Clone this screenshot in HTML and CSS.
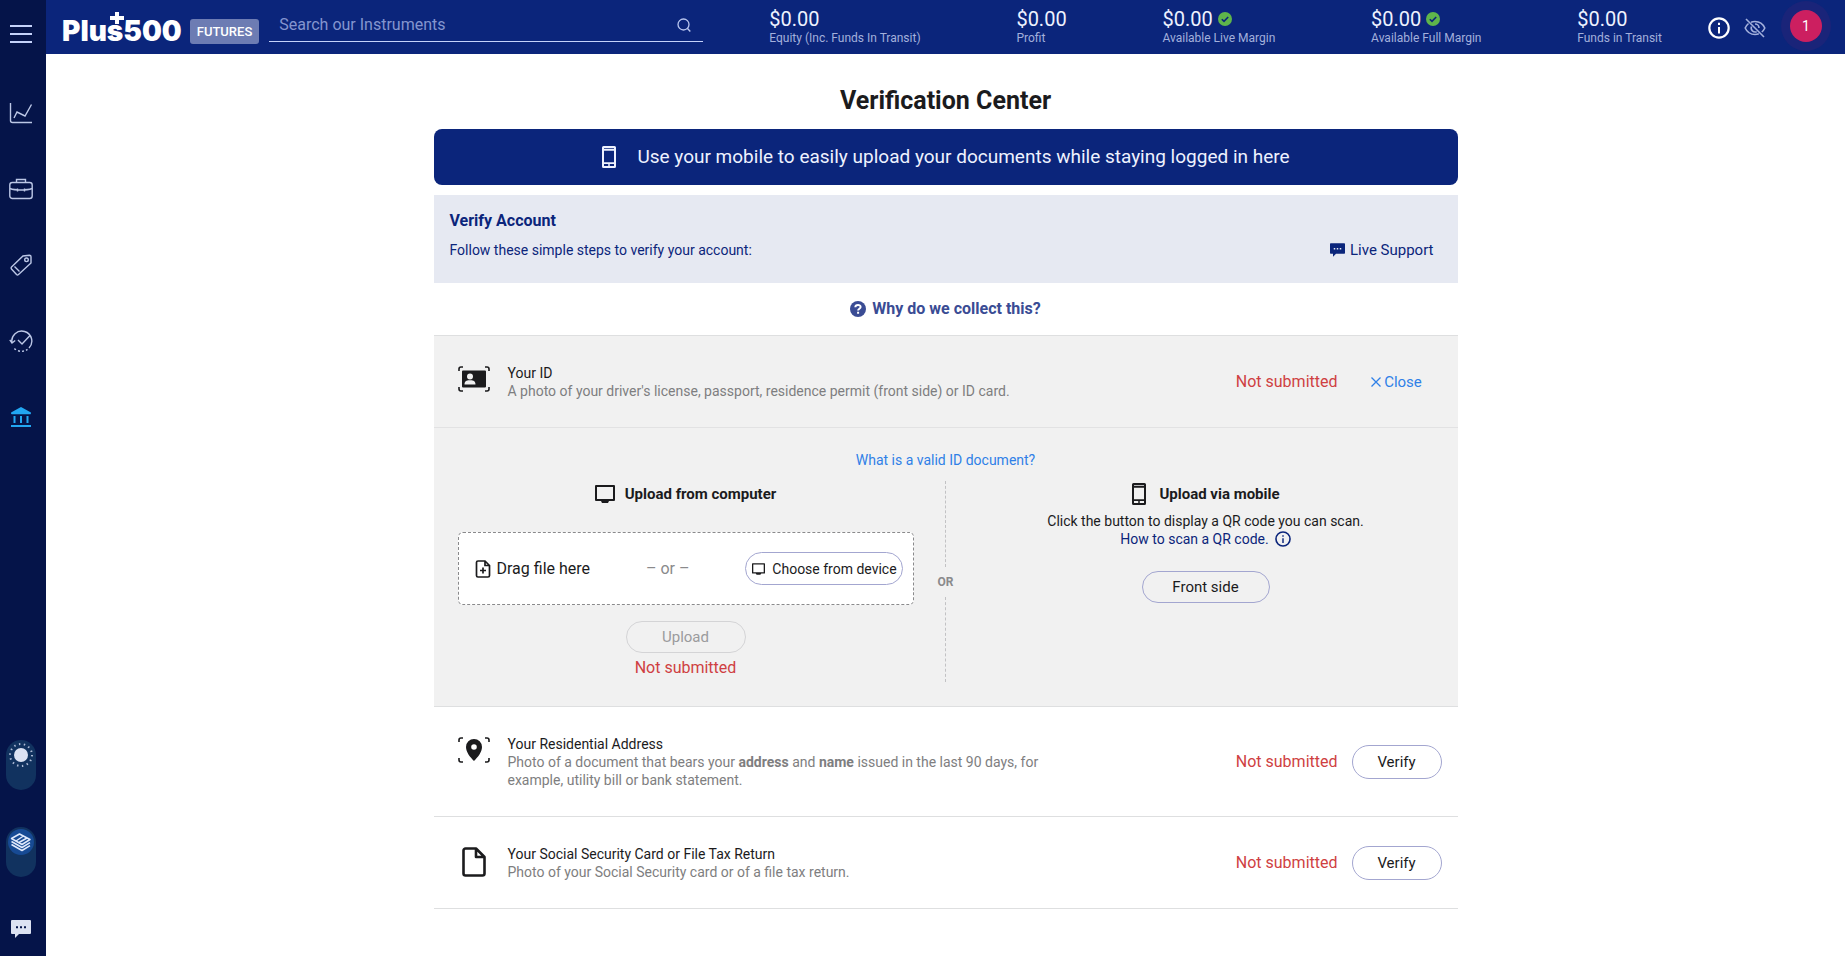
FILE: index.html
```html
<!DOCTYPE html>
<html lang="en">
<head>
<meta charset="utf-8">
<title>Verification Center</title>
<link rel="stylesheet" href="styles.css">
</head>
<body class="app">
<svg class="defs" width="0" height="0" aria-hidden="true">
  <symbol id="phone" viewBox="0 0 16 24"><path fill="currentColor" fill-rule="evenodd" d="M2.500 1h11A1.500 1.500 0 0 1 15 2.500v19a1.500 1.500 0 0 1-1.500 1.500h-11A1.500 1.500 0 0 1 1 21.500v-19A1.500 1.500 0 0 1 2.500 1zM3 3v.8h10V3zM3 5.800v11.400h10V5.800zM3 19v2h10v-2z"/><circle cx="8" cy="20" r="1" fill="currentColor"/></symbol>
  <symbol id="monitor" viewBox="0 0 20 18"><path fill="none" stroke="currentColor" stroke-width="2" stroke-linejoin="round" d="M1 1h18v14H1z"/><path fill="currentColor" d="M6 15h8v1l-1 2H7l-1-2z"/></symbol>
  <symbol id="info" viewBox="0 0 20 20"><circle cx="10" cy="10" r="8.800" fill="none" stroke="currentColor" stroke-width="2"/><path stroke="currentColor" stroke-width="1.800" d="M10 9v6M10 5.200v2"/></symbol>
  <symbol id="chat" viewBox="0 0 20 18"><path fill="currentColor" fill-rule="evenodd" d="M1 0h18a1 1 0 0 1 1 1v12a1 1 0 0 1-1 1H8l-4 4v-4H1a1 1 0 0 1-1-1V1a1 1 0 0 1 1-1zm4 6.200v2h2v-2zm4 0v2h2v-2zm4 0v2h2v-2z"/></symbol>
  <symbol id="check" viewBox="0 0 14 14"><circle cx="7" cy="7" r="7" fill="#5fb54b"/><path fill="none" stroke="#0b257b" stroke-width="1.600" d="M3.800 7.200l2.200 2.200 4.200-4.400"/></symbol>
  <symbol id="frame" viewBox="0 0 32 26"><path fill="none" stroke="currentColor" stroke-width="1.600" d="M1 5V3a2 2 0 0 1 2-2h2M27 1h2a2 2 0 0 1 2 2v2M31 21v2a2 2 0 0 1-2 2h-2M5 25H3a2 2 0 0 1-2-2v-2"/></symbol>
</svg>

<aside class="sidebar">
  <button class="side-btn menu-btn" aria-label="Menu"><svg width="22" height="20" viewBox="0 0 22 20"><path stroke="#c5d2fa" stroke-width="2" d="M0 2h22M0 10h22M0 18h22"/></svg></button>
  <nav class="side-nav" aria-label="Main">
    <a class="side-link" href="#" aria-label="Trade"><svg width="24" height="24" viewBox="0 0 24 24"><path d="M1.500 2v17.500a2 2 0 0 0 2 2H23M5 17l3-6 8 4 6.500-11.500"/></svg></a>
    <a class="side-link" href="#" aria-label="Positions"><svg width="24" height="24" viewBox="0 0 24 24"><rect x=".8" y="5.500" width="22.400" height="16" rx="2.500"/><path d="M7.500 5.500v-3h9v3M1 11.500c5 2 17 2 22 0M8.500 11.500v3M15.500 11.500v3"/></svg></a>
    <a class="side-link" href="#" aria-label="Orders"><svg width="24" height="24" viewBox="0 0 24 24"><path d="M2.500 14 14 3l6.500-.8a1.500 1.500 0 0 1 1.500 1.500V10L9.500 21.500a1.500 1.500 0 0 1-2 0l-5-5.500a1.500 1.500 0 0 1 0-2zM5.500 13.500l5 5"/><circle cx="17.500" cy="6.800" r="1.800"/></svg></a>
    <a class="side-link" href="#" aria-label="History"><svg width="24" height="24" viewBox="0 0 24 24"><path d="M3 14A10 10 0 1 1 20 19M18.500 20.300l-1.500 1M15 22l-2 .4M11 22.300l-2-.5M7 20.800l-1.700-1.200M.8 10.800 3 14l3.200-2.500M9 11l4 4 8-8.500"/></svg></a>
    <a class="side-link active" href="#" aria-label="Funds"><svg width="22" height="22" viewBox="0 0 22 22"><path d="M2 7.200 11 2l9 5.200z"/><path d="M4.500 10v7M11 10v7M17.500 10v7M1 20h20"/></svg></a>
  </nav>
  <div class="side-tools">
    <button class="toggle" aria-label="Theme"><svg width="26" height="26" viewBox="0 0 26 26"><circle cx="13" cy="13" r="7" fill="#dce2f2"/><circle cx="13" cy="13" r="11" fill="none" stroke="#aebbd6" stroke-width="2" stroke-dasharray="1.400 3.540"/></svg></button>
    <button class="toggle" aria-label="Account mode"><svg width="26" height="26" viewBox="0 0 26 26"><circle cx="13" cy="13" r="13" fill="#174a94"/><g fill="none" stroke="#dfe8fb" stroke-width="1.500" stroke-linejoin="round"><path d="M3.500 9.500 11.500 5 22 10.500l-8 5zM8 12l7.500-5M11 13.500 19 9M3.500 12.500l10.500 6 8-4.800M3.500 15.500l10.500 6 8-4.800"/></g></svg></button>
    <button class="side-btn chat-btn" aria-label="Chat"><svg width="20" height="18"><use href="#chat"/></svg></button>
  </div>
</aside>

<div class="page">
  <header class="topbar">
    <a class="brand" href="#" aria-label="Plus500 Futures"><span class="wordmark">Plus500<svg class="wordmark-plus" width="14" height="12" viewBox="0 0 14 12"><path fill="#fff" d="M5 0h4v4h5v4H9v4H5V8H0V4h5z"/></svg></span><span class="tag">FUTURES</span></a>
    <label class="search"><input class="search-input" type="text" placeholder="Search our Instruments" aria-label="Search our Instruments"><svg width="14" height="14" viewBox="0 0 14 14"><circle cx="6.500" cy="6.500" r="5.500" fill="none" stroke="#b9c6f0" stroke-width="1.300"/><path stroke="#b9c6f0" stroke-width="1.400" d="m10.300 10.300 3 3.200"/></svg></label>
    <div class="stats">
      <div class="stat"><div class="stat-value">$0.00</div><div class="stat-label">Equity (Inc. Funds In Transit)</div></div>
      <div class="stat"><div class="stat-value">$0.00</div><div class="stat-label">Profit</div></div>
      <div class="stat"><div class="stat-value">$0.00<svg width="14" height="14"><use href="#check"/></svg></div><div class="stat-label">Available Live Margin</div></div>
      <div class="stat"><div class="stat-value">$0.00<svg width="14" height="14"><use href="#check"/></svg></div><div class="stat-label">Available Full Margin</div></div>
      <div class="stat"><div class="stat-value">$0.00</div><div class="stat-label">Funds in Transit</div></div>
    </div>
    <div class="actions">
      <button class="icon-btn" aria-label="Information"><svg width="22" height="22"><use href="#info"/></svg></button>
      <button class="icon-btn dim" aria-label="Hide balances"><svg width="22" height="20" viewBox="0 0 22 20" fill="none" stroke="currentColor" stroke-width="1.600"><path d="M7 4.200A11 11 0 0 1 11 3.500c4.500 0 8 2.500 9.800 6.500a11 11 0 0 1-3 4M4.500 5.500A11 11 0 0 0 1.200 10c1.800 4 5.300 6.500 9.800 6.500a11 11 0 0 0 3.800-.7M7.500 8.500a4 4 0 0 0 5.200 5.200M11 6a4 4 0 0 1 4 4M2 1l18 18"/></svg></button>
      <button class="avatar">1</button>
    </div>
  </header>

  <main class="content">
    <h1 class="title">Verification Center</h1>
    <a class="banner" href="#"><svg width="16" height="24"><use href="#phone"/></svg>Use your mobile to easily upload your documents while staying logged in here</a>
    <section class="intro">
      <h2 class="intro-title">Verify Account</h2>
      <div class="intro-row"><span>Follow these simple steps to verify your account:</span><a class="support" href="#"><svg width="15" height="14"><use href="#chat"/></svg>Live Support</a></div>
    </section>
    <a class="why" href="#"><svg width="16" height="16" viewBox="0 0 16 16"><circle cx="8" cy="8" r="8" fill="#3a4c94"/><path fill="none" stroke="#fff" stroke-width="2" d="M5.300 6.200C5.500 3.200 10.700 3.400 10.600 6c0 1.700-2.500 1.700-2.500 3.600M8.100 10.800v2"/></svg>Why do we collect this?</a>

    <section class="item open">
      <div class="item-head">
        <svg class="item-icon" width="32" height="26" viewBox="0 0 32 26"><use href="#frame" width="32" height="26"/><path fill="currentColor" fill-rule="evenodd" d="M5 4.500h22a1 1 0 0 1 1 1v15a1 1 0 0 1-1 1H5a1 1 0 0 1-1-1v-15a1 1 0 0 1 1-1zM12 7.500a3 3 0 1 0 0 6 3 3 0 0 0 0-6zM6.500 18.500h11c0-4-3.500-4.200-5.500-4.200s-5.500.2-5.500 4.200z"/></svg>
        <div class="item-text"><h3 class="item-title">Your ID</h3><p class="item-desc">A photo of your driver's license, passport, residence permit (front side) or ID card.</p></div>
        <span class="status">Not submitted</span>
        <button class="close"><svg width="10" height="10" viewBox="0 0 10 10"><path stroke="currentColor" stroke-width="1.300" d="m.5.5 9 9m0-9-9 9"/></svg>Close</button>
      </div>
      <div class="details">
        <a class="valid-link" href="#">What is a valid ID document?</a>
        <div class="methods">
          <div class="method">
            <h4 class="method-title"><svg width="20" height="18"><use href="#monitor"/></svg>Upload from computer</h4>
            <div class="dropzone">
              <span class="drag"><svg width="16" height="18" viewBox="0 0 16 18" fill="none" stroke="currentColor" stroke-width="1.700"><path d="M10 1H3a1.500 1.500 0 0 0-1.500 1.500v13A1.500 1.500 0 0 0 3 17h10a1.500 1.500 0 0 0 1.500-1.500V5.500zM10 1v4.500h4.500M8 7.500v6M5 10.500h6"/></svg>Drag file here</span>
              <span class="or-inline">– or –</span>
              <button class="pill choose"><svg width="13" height="12"><use href="#monitor"/></svg>Choose from device</button>
            </div>
            <button class="pill upload" disabled>Upload</button>
            <span class="status">Not submitted</span>
          </div>
          <div class="divider">OR</div>
          <div class="method">
            <h4 class="method-title mobile"><svg width="16" height="24"><use href="#phone"/></svg>Upload via mobile</h4>
            <p class="scan">Click the button to display a QR code you can scan.<a class="how" href="#">How to scan a QR code.<svg width="16" height="16"><use href="#info"/></svg></a></p>
            <button class="pill front">Front side</button>
          </div>
        </div>
      </div>
    </section>

    <section class="item">
      <div class="item-head">
        <svg class="item-icon" width="32" height="26" viewBox="0 0 32 26"><use href="#frame" width="32" height="26"/><path fill="currentColor" fill-rule="evenodd" d="M16 2a8 8 0 0 1 8 8c0 5-4 10-8 14-4-4-8-9-8-14a8 8 0 0 1 8-8zm0 5.200a2.800 2.800 0 1 0 0 5.600 2.800 2.800 0 0 0 0-5.600z"/></svg>
        <div class="item-text"><h3 class="item-title">Your Residential Address</h3><p class="item-desc">Photo of a document that bears your <b>address</b> and <b>name</b> issued in the last 90 days, for example, utility bill or bank statement.</p></div>
        <span class="status">Not submitted</span>
        <button class="pill verify">Verify</button>
      </div>
    </section>
    <section class="item">
      <div class="item-head">
        <svg class="item-icon" width="32" height="30" viewBox="0 0 32 30" fill="none" stroke="currentColor" stroke-width="2.600" stroke-linejoin="round"><path d="M18 1.500H7.500a2 2 0 0 0-2 2v23a2 2 0 0 0 2 2h17a2 2 0 0 0 2-2V10zM18 1.500V10h8.500"/></svg>
        <div class="item-text"><h3 class="item-title">Your Social Security Card or File Tax Return</h3><p class="item-desc">Photo of your Social Security card or of a file tax return.</p></div>
        <span class="status">Not submitted</span>
        <button class="pill verify">Verify</button>
      </div>
    </section>
  </main>
</div>
</body>
</html>
```
FILE: styles.css
```css
* { box-sizing: border-box; }
.app {
  margin: 0;
  min-height: 100vh;
  display: flex;
  font: 14px/18px Roboto, "Liberation Sans", sans-serif;
  color: #1b1b1d;
  background: #fff;
}
.defs { position: absolute; }
svg { flex: none; display: block; }
a { color: inherit; text-decoration: none; }
button { font: inherit; color: inherit; background: none; border: 0; padding: 0; margin: 0; cursor: pointer; }
h1, h2, h3, h4, p { margin: 0; font-size: 14px; font-weight: 400; }

.sidebar {
  flex: none;
  width: 46px;
  padding-right: 4px;
  background: #051449;
  display: flex;
  flex-direction: column;
  align-items: center;
}
.side-btn { display: flex; align-items: center; justify-content: center; color: #dce2f2; }
.menu-btn { height: 54px; padding-top: 14px; }
.side-nav { display: flex; flex-direction: column; margin-top: 21px; }
.side-link { height: 76px; display: flex; align-items: center; justify-content: center; }
.side-link svg { fill: none; stroke: #bcc7e6; stroke-width: 1.4; }
.side-link.active svg { stroke: #22a7f2; stroke-width: 2; stroke-linejoin: round; }
.side-link.active path:first-child { fill: #22a7f2; }
.side-tools { margin-top: auto; display: flex; flex-direction: column; align-items: center; padding-bottom: 18px; }
.toggle {
  width: 30px;
  height: 50px;
  margin-bottom: 37px;
  padding: 2px;
  border-radius: 15px;
  background: #11325f;
  display: flex;
  align-items: flex-start;
}
.chat-btn { margin-top: 6px; }

.page { flex: 1; min-width: 0; }
.topbar { height: 54px; background: #0b257b; display: flex; align-items: center; padding: 0 23px 0 16px; }
.brand { display: flex; align-items: flex-end; gap: 8px; height: 25px; margin-top: 9px; }
.wordmark { position: relative; font: 900 28px/26px Inter, sans-serif; color: #fff; }
.wordmark-plus { position: absolute; left: 48px; top: -6px; }
.tag {
  height: 25px;
  padding: 0 7px;
  border-radius: 3px;
  background: #6d7cb3;
  color: #fff;
  font-size: 13px;
  font-weight: 500;
  line-height: 25px;
}
.search {
  flex: 0 1 434px;
  height: 34px;
  margin: 4px 66px 8px 10px;
  padding: 0 12px 0 10px;
  border-bottom: 1px solid #c5d2fa;
  display: flex;
  align-items: center;
}
.search-input { flex: 1; min-width: 0; border: 0; outline: 0; padding: 0; background: none; color: #fff; font: 16px/20px Roboto, sans-serif; }
.search-input::placeholder { color: #8495cf; opacity: 1; }
.stats { flex: 1; display: flex; justify-content: space-between; white-space: nowrap; padding-top: 2px; }
.stat-value { display: flex; align-items: center; gap: 5px; font-size: 20px; line-height: 20px; color: #eef2ff; }
.stat-label { font-size: 12px; color: #a3b0dc; }
.actions { display: flex; align-items: center; gap: 14px; margin-left: 46px; }
.icon-btn { color: #fff; padding-top: 2px; }
.icon-btn.dim { color: #a3b0dc; }
.avatar { width: 32px; height: 32px; margin: 0 0 2px 10px; border-radius: 50%; background: #cc1f60; color: #fff; box-shadow: 0 0 0 9px rgba(204, 31, 96, .08); }

.content { max-width: 1024px; margin: 0 auto; padding-top: 33px; }
.title { font-size: 25px; line-height: 28px; font-weight: 700; text-align: center; }
.banner {
  height: 56px;
  margin-top: 14px;
  border-radius: 8px;
  background: #0b257b;
  color: #eef2ff;
  font-size: 19px;
  display: flex;
  align-items: center;
  justify-content: center;
  gap: 20px;
}
.intro { margin-top: 10px; height: 88px; padding: 17px 16px 16px; background: #e6e9f2; color: #0b257b; }
.intro-title { font-size: 16px; font-weight: 700; }
.intro-row { display: flex; justify-content: space-between; margin-top: 11px; padding-right: 8px; }
.support { display: flex; align-items: center; gap: 5px; font-size: 15px; }
.why { height: 52px; display: flex; align-items: center; justify-content: center; gap: 6px; color: #3a4c94; font-size: 16px; font-weight: 700; }

.item { border-bottom: 1px solid #dedfe0; }
.item.open { border-top: 1px solid #dedfe0; background: #f1f1f1; }
.item-head { padding: 28px 16px 27px 24px; display: flex; align-items: center; }
.item-icon { align-self: flex-start; margin-top: 2px; }
.item-text { flex: 0 1 560px; margin-left: 18px; }
.item-title { color: #1b1b1d; }
.item-desc { color: #7e7e80; }
.status { font-size: 16px; color: #cf3f42; }
.item-head .status { margin-left: auto; }
.close { width: 90px; margin-left: 14px; display: flex; align-items: center; justify-content: center; gap: 3px; font-size: 15px; color: #2f80e7; }
.pill { height: 32px; border: 1px solid #a3a6d0; border-radius: 17px; font-size: 15px; }
.verify { width: 90px; height: 34px; margin-left: 14px; }

.details { border-top: 1px solid #e2e2e3; padding: 23px 24px 24px; display: flex; flex-direction: column; align-items: center; }
.valid-link { color: #2f80e7; }
.methods { align-self: stretch; display: grid; grid-template-columns: 1fr 64px 1fr; margin-top: 12px; }
.method { display: flex; flex-direction: column; align-items: center; padding-bottom: 5px; }
.method-title { height: 26px; display: flex; align-items: center; gap: 10px; font-size: 15px; font-weight: 700; }
.method-title.mobile { gap: 12px; }
.dropzone {
  align-self: stretch;
  height: 73px;
  margin: 25px 0 16px;
  padding: 0 9px 0 16px;
  border: 1px dashed #8a8a8c;
  border-radius: 5px;
  background: #fff;
  display: flex;
  align-items: center;
  justify-content: space-between;
  font-size: 16px;
}
.drag { display: flex; align-items: center; gap: 6px; }
.or-inline { color: #8a8a8c; }
.choose { width: 158px; height: 33px; display: flex; align-items: center; justify-content: center; gap: 7px; font-size: 14px; }
.upload { width: 120px; margin-bottom: 6px; border-color: #d4d4d6; color: #9b9b9d; }
.divider { display: flex; flex-direction: column; align-items: center; gap: 6px; font-size: 12px; font-weight: 700; color: #8a8a8c; }
.divider::before, .divider::after { content: ""; flex: 1; border-left: 1px dashed #c2c2c4; }
.scan { margin-top: 5px; text-align: center; }
.how { display: flex; align-items: center; justify-content: center; gap: 6px; color: #0b257b; }
.front { width: 128px; margin-top: 23px; }
```
